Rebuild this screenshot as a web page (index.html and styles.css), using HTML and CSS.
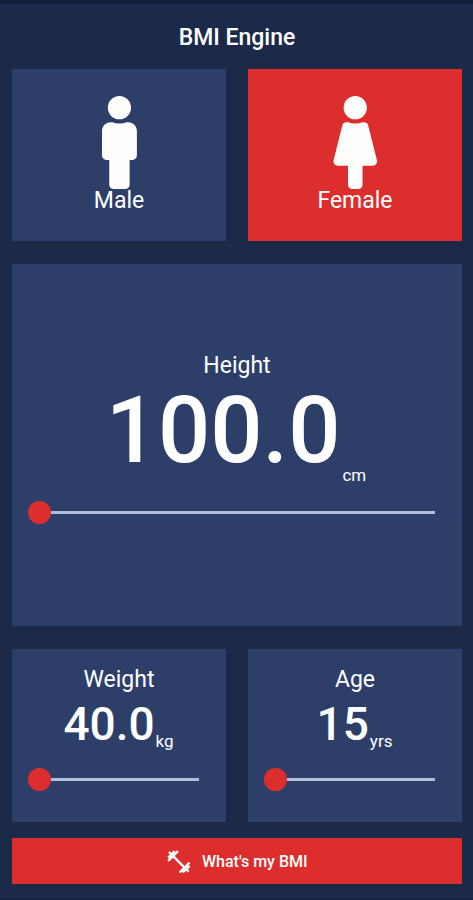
FILE: index.html
```html
<!DOCTYPE html>
<html lang="en">
<head>
<meta charset="utf-8">
<title>BMI Engine</title>
<link rel="stylesheet" href="styles.css">
</head>
<body>
<main class="app">
  <h1 class="title">BMI Engine</h1>
  <section class="row">
    <div class="card gender">
      <svg class="person" viewBox="0 0 192 512"><path d="M96 0c35.346 0 64 28.654 64 64s-28.654 64-64 64-64-28.654-64-64S60.654 0 96 0m48 144h-11.36c-22.711 10.443-49.59 10.894-73.28 0H48c-26.51 0-48 21.49-48 48v136c0 13.255 10.745 24 24 24h16v136c0 13.255 10.745 24 24 24h64c13.255 0 24-10.745 24-24V352h16c13.255 0 24-10.745 24-24V192c0-26.51-21.49-48-48-48z"/></svg>
      <span class="label">Male</span>
    </div>
    <div class="card gender selected">
      <svg class="person" viewBox="0 0 256 512"><path d="M128 0c35.346 0 64 28.654 64 64s-28.654 64-64 64c-35.346 0-64-28.654-64-64S92.654 0 128 0m119.283 354.179l-48-192A24 24 0 0 0 176 144h-11.36c-22.711 10.443-49.59 10.894-73.28 0H80a24 24 0 0 0-23.283 18.179l-48 192C4.935 369.305 16.383 384 32 384h56v104c0 13.255 10.745 24 24 24h32c13.255 0 24-10.745 24-24V384h56c15.591 0 27.071-14.671 23.283-29.821z"/></svg>
      <span class="label">Female</span>
    </div>
  </section>
  <section class="card height">
    <span class="label">Height</span>
    <div class="reading large"><span class="value">100.0</span><span class="unit">cm</span></div>
    <div class="slider"><span class="thumb"></span><span class="track"></span></div>
  </section>
  <section class="row">
    <div class="card small">
      <span class="label">Weight</span>
      <div class="reading"><span class="value">40.0</span><span class="unit">kg</span></div>
      <div class="slider"><span class="thumb"></span><span class="track"></span></div>
    </div>
    <div class="card small">
      <span class="label">Age</span>
      <div class="reading"><span class="value">15</span><span class="unit">yrs</span></div>
      <div class="slider"><span class="thumb"></span><span class="track"></span></div>
    </div>
  </section>
  <button class="submit">
    <svg class="dumbbell" viewBox="0 0 24 24"><path d="M20.57 14.86 22 13.43 20.57 12 17 15.57 8.43 7 12 3.43 10.57 2 9.14 3.43 7.71 2 5.57 4.14 4.14 2.71 2.71 4.14l1.43 1.43L2 7.71l1.43 1.43L2 10.57 3.43 12 7 8.43 15.57 17 12 20.57 13.43 22l1.43-1.43L16.29 22l2.14-2.14 1.43 1.43 1.43-1.43-1.43-1.43L22 16.29z"/></svg>
    <span>What's my BMI</span>
  </button>
</main>
</body>
</html>
```
FILE: styles.css
```css
* { box-sizing: border-box; }
body {
  margin: 0;
  background: #1b2a49;
  color: #fff;
  font-family: Roboto, "Liberation Sans", sans-serif;
}
.app {
  height: 900px;
  padding: 20px 11px 0 12px;
  border-top: 4px solid #13203c;
  border-bottom: 1px solid #13203c;
}
.title {
  margin: 0 0 18px;
  font-size: 23px;
  line-height: 27px;
  font-weight: 500;
  text-align: center;
}
.row {
  display: grid;
  grid-template-columns: 214px 214px;
  gap: 22px;
}
.card {
  display: flex;
  flex-direction: column;
  align-items: center;
  background: #2d3e69;
}
.gender { height: 172px; padding-top: 27px; }
.selected { background: #dd2e2e; }
.person { height: 93px; fill: #fffefc; flex: none; overflow: visible; }
.label { font-size: 23px; line-height: 27px; }
.gender .label { margin-top: -2px; }
.height {
  height: 362px;
  margin: 23px 0;
  padding-top: 88px;
}
.reading { display: flex; align-items: flex-end; }
.value { margin-right: 1px; font-size: 46px; line-height: 54px; font-weight: 500; }
.unit { font-size: 17px; line-height: 20px; }
.large { margin-top: -2px; padding-right: 2px; }
.large .value { margin-right: 2px; font-size: 92px; line-height: 108px; }
.slider {
  display: flex;
  align-items: center;
  align-self: stretch;
  height: 24px;
  margin: 15px 27px 0 16px;
}
.thumb {
  width: 23px;
  height: 23px;
  border-radius: 50%;
  background: #dd2e2e;
}
.track { flex: 1; height: 3px; background: #b0bfd5; }
.small { height: 173px; padding-top: 17px; }
.small .reading { margin-top: 4px; padding-right: 1px; }
.small .slider { margin-top: 16px; }
.submit {
  display: flex;
  align-items: center;
  justify-content: center;
  gap: 9px;
  width: 450px;
  height: 46px;
  margin: 16px 0 0;
  padding: 1px 1px 0 0;
  border: 0;
  background: #dd2e2e;
  color: #fff;
  font: 500 16px/20px Roboto, "Liberation Sans", sans-serif;
}
.dumbbell { width: 27.6px; height: 27.6px; fill: #fff; }
```
